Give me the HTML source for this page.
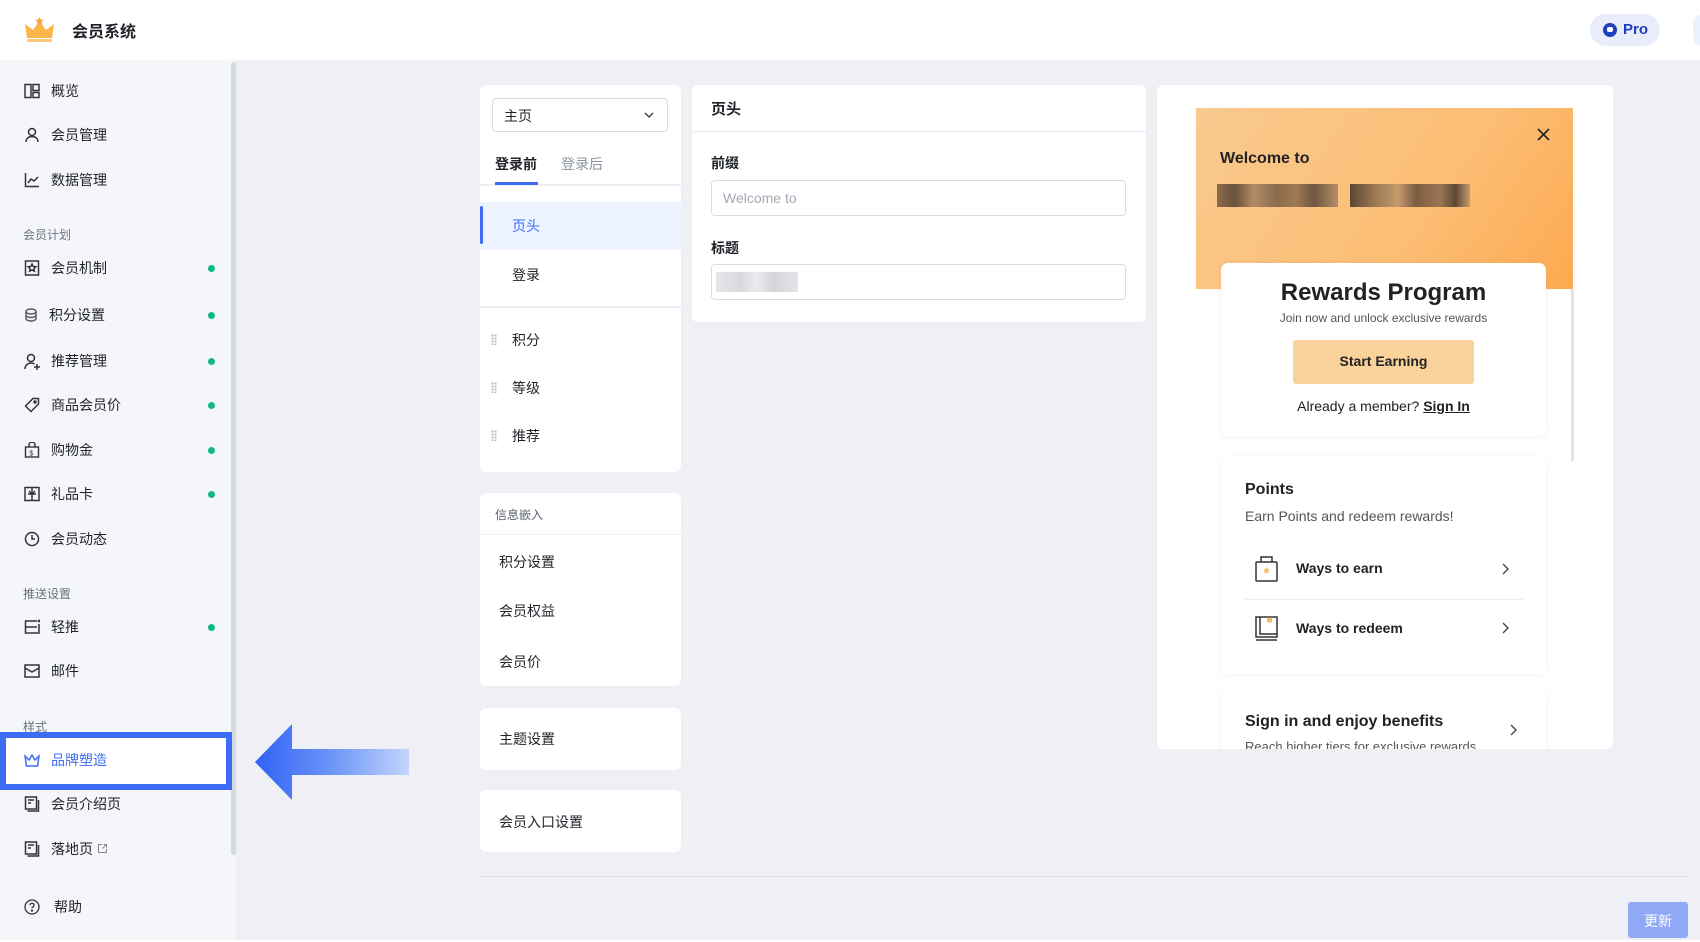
<!DOCTYPE html>
<html><head><meta charset="utf-8">
<style>
*{margin:0;padding:0;box-sizing:border-box}
body{width:1700px;height:942px;overflow:hidden;background:#eef0f5;font-family:"Liberation Sans","Noto Sans CJK SC",sans-serif;color:#1f2329;position:relative}
.a{position:absolute}
.hdr{left:0;top:0;width:1700px;height:60px;background:#fff}
.side{left:0;top:60px;width:236px;height:881px;background:#f5f6fa}
.mi{position:absolute;left:0;width:230px;height:40px;font-size:14px;color:#1f2329}
.mi svg{position:absolute;left:24px;top:12px}
.mi span{position:absolute;left:51px;top:10px}
.dot{position:absolute;left:208px;top:17px;width:7px;height:7px;border-radius:50%;background:#10b981}
.sec{position:absolute;left:23px;font-size:12px;color:#6b7280}
.panel{background:#fff;border-radius:6px}
.li{position:absolute;left:0;width:201px;font-size:14px;color:#1f2329}
.drag{position:absolute;left:11px;width:6px;height:11px;background-image:radial-gradient(circle,#b8bcc6 1px,transparent 1.2px);background-size:3px 3px}
.inp{border:1px solid #d9dce3;border-radius:4px;background:#fff}
</style></head><body>
<div class="a hdr">
 <svg class="a" style="left:24px;top:17px" width="31" height="26" viewBox="0 0 31 26"><path d="M1 7 L9 13 L15.5 4 L22 13 L30 7 L28 21 L3 21Z" fill="#fbb54a"/><path d="M15.5 0 l1.3 2.6 2.8.3-2 2 .5 2.8-2.6-1.4-2.6 1.4.5-2.8-2-2 2.8-.3z" fill="#f7a43c"/><rect x="3" y="22" width="25" height="3" rx="1" fill="#fcc877"/></svg>
 <div class="a" style="left:72px;top:18px;font-size:16px;font-weight:bold">会员系统</div>
 <div class="a" style="left:1590px;top:14px;width:70px;height:32px;border-radius:16px;background:#e9ecfb;color:#1e3fc0;font-size:15px;font-weight:bold;padding:7px 0 0 33px">Pro</div>
 <div class="a" style="left:1603px;top:23px;width:14px;height:14px;border-radius:50%;background:#1e3fc0"></div>
 <div class="a" style="left:1607px;top:27px;width:6px;height:5px;border-radius:2px;background:#fff"></div>
 <div class="a" style="left:1693px;top:14px;width:20px;height:32px;border-radius:16px;background:#eaf1fd"></div>
</div>
<div class="a side">
 <div class="a" style="left:231px;top:2px;width:5px;height:793px;background:#d5d9e2;border-radius:3px"></div>
</div>
<div class="mi" style="top:71px"><svg width="16" height="16" viewBox="0 0 16 16" fill="none" stroke="#333" stroke-width="1.5"><rect x="1" y="1.5" width="6" height="13"/><rect x="9" y="1.5" width="6" height="6"/><rect x="9" y="9.5" width="6" height="5"/></svg><span>概览</span></div>
<div class="mi" style="top:115px"><svg width="16" height="16" viewBox="0 0 16 16" fill="none" stroke="#333" stroke-width="1.5"><circle cx="8" cy="5" r="3.5"/><path d="M2 15c0-3.5 2.7-5.5 6-5.5s6 2 6 5.5"/></svg><span>会员管理</span></div>
<div class="mi" style="top:160px"><svg width="16" height="16" viewBox="0 0 16 16" fill="none" stroke="#333" stroke-width="1.5"><path d="M1.5 1v13.5H15M4 11l3-4 3 2 4-4"/></svg><span>数据管理</span></div>
<div class="sec" style="top:226px">会员计划</div>
<div class="mi" style="top:248px"><svg width="16" height="16" viewBox="0 0 16 16" fill="none" stroke="#333" stroke-width="1.5"><rect x="1.5" y="1" width="13" height="14"/><path d="M8 4l1.2 2.4 2.6.4-1.9 1.8.5 2.6L8 10l-2.4 1.2.5-2.6-1.9-1.8 2.6-.4z"/></svg><span>会员机制</span><i class="dot"></i></div>
<div class="mi" style="top:295px"><svg width="16" height="16" viewBox="0 0 16 16" fill="none" stroke="#555" stroke-width="1.4"><ellipse cx="7" cy="4.5" rx="5" ry="2.5"/><path d="M2 4.5v7c0 1.4 2.2 2.5 5 2.5s5-1.1 5-2.5v-7M2 8c0 1.4 2.2 2.5 5 2.5s5-1.1 5-2.5"/></svg><span style="left:49px">积分设置</span><i class="dot"></i></div>
<div class="mi" style="top:341px"><svg width="18" height="18" viewBox="0 0 18 18" fill="none" stroke="#333" stroke-width="1.5"><circle cx="7" cy="5" r="3.5"/><path d="M1 16c0-3.5 2.7-6 6-6 1.5 0 2.5.4 3.5 1M13 11v6M10 14h6"/></svg><span>推荐管理</span><i class="dot"></i></div>
<div class="mi" style="top:385px"><svg width="16" height="16" viewBox="0 0 16 16" fill="none" stroke="#333" stroke-width="1.5"><path d="M9 1.5h5.5V7L7 14.5 1.5 9z"/><circle cx="11" cy="5" r="1"/></svg><span>商品会员价</span><i class="dot"></i></div>
<div class="mi" style="top:430px"><svg width="16" height="16" viewBox="0 0 16 16" fill="none" stroke="#333" stroke-width="1.4"><rect x="1.5" y="5" width="13" height="10"/><path d="M5 5V3a3 3 0 0 1 6 0v2"/><text x="5.3" y="13.5" font-size="7" fill="#333" stroke="none">$</text></svg><span>购物金</span><i class="dot"></i></div>
<div class="mi" style="top:474px"><svg width="16" height="16" viewBox="0 0 16 16" fill="none" stroke="#333" stroke-width="1.5"><rect x="1" y="1.5" width="14" height="13"/><path d="M8 1.5v13M4 8h8M5 5l3 3 3-3"/></svg><span>礼品卡</span><i class="dot"></i></div>
<div class="mi" style="top:519px"><svg width="16" height="16" viewBox="0 0 16 16" fill="none" stroke="#333" stroke-width="1.5"><circle cx="8" cy="8" r="6.5"/><path d="M8 4v4h3"/></svg><span>会员动态</span></div>
<div class="sec" style="top:585px">推送设置</div>
<div class="mi" style="top:607px"><svg width="16" height="16" viewBox="0 0 16 16" fill="none" stroke="#333" stroke-width="1.5"><path d="M13 2H1.5v12H15V5M1.5 8H13"/><circle cx="15" cy="2" r=".6" fill="#333"/></svg><span>轻推</span><i class="dot"></i></div>
<div class="mi" style="top:651px"><svg width="16" height="16" viewBox="0 0 16 16" fill="none" stroke="#333" stroke-width="1.5"><rect x="1" y="2" width="14" height="12"/><path d="M1 5l7 4 7-4"/></svg><span>邮件</span></div>
<div class="sec" style="top:718px">样式</div>
<div class="a" style="left:0;top:732px;width:232px;height:58px;border:6px solid #3d6df5;background:#fff"></div>
<div class="mi" style="top:740px;color:#3d6df5"><svg width="16" height="16" viewBox="0 0 16 16" fill="none" stroke="#3d6df5" stroke-width="1.5"><path d="M1 4l4 4 3-5 3 5 4-4-1.5 10h-11z"/></svg><span>品牌塑造</span></div>
<div class="mi" style="top:784px"><svg width="16" height="16" viewBox="0 0 16 16" fill="none" stroke="#333" stroke-width="1.5"><rect x="1.5" y="1" width="11" height="12"/><path d="M4 4h6M4 7h3M3.5 15H14.5V4"/></svg><span>会员介绍页</span></div>
<div class="mi" style="top:829px"><svg width="16" height="16" viewBox="0 0 16 16" fill="none" stroke="#333" stroke-width="1.5"><rect x="1.5" y="1" width="11" height="12"/><path d="M4 4h6M4 7h3M3.5 15H14.5V4"/></svg><span>落地页 <svg width="11" height="11" viewBox="0 0 11 11" fill="none" stroke="#888" stroke-width="1" style="position:static;vertical-align:0"><path d="M5 1.5H1.5v8h8V6M6.5 1.5h3v3M9.5 1.5l-4 4"/></svg></span></div>
<div class="mi" style="top:887px"><svg width="16" height="16" viewBox="0 0 16 16" fill="none" stroke="#333" stroke-width="1.3"><circle cx="8" cy="8" r="7"/><path d="M6 6.3a2 2 0 1 1 2.5 1.9c-.4.2-.5.5-.5 1.2"/><circle cx="8" cy="11.6" r=".5" fill="#333"/></svg><span style="left:54px">帮助</span></div>
<div class="a" style="left:0;top:940px;width:1700px;height:2px;background:#fff"></div>

<svg class="a" style="left:254px;top:723px" width="156" height="78" viewBox="0 0 156 78"><defs><linearGradient id="g" x1="0" x2="1"><stop offset="0" stop-color="#2f63f6"/><stop offset=".5" stop-color="#6d95f8"/><stop offset="1" stop-color="#c3d5fd"/></linearGradient></defs><path d="M1 39 L38 1 V26 H155 V52 H38 V77Z" fill="url(#g)"/></svg>

<div class="a panel" style="left:480px;top:85px;width:201px;height:387px">
 <div class="a inp" style="left:12px;top:13px;width:176px;height:34px;font-size:14px;padding:7px 0 0 11px">主页
  <svg class="a" style="left:151px;top:13px" width="10" height="7" viewBox="0 0 10 7" fill="none" stroke="#333" stroke-width="1.3"><path d="M1 1l4 4 4-4"/></svg></div>
 <div class="a" style="left:15px;top:69px;font-size:14px;font-weight:bold">登录前</div>
 <div class="a" style="left:81px;top:69px;font-size:14px;color:#8b93a1">登录后</div>
 <div class="a" style="left:0;top:99px;width:201px;height:2px;background:#eef0f4"></div>
 <div class="a" style="left:15px;top:97px;width:43px;height:3px;background:#3d6df5"></div>
 <div class="a" style="left:0;top:117px;width:201px;height:48px;background:#edf4ff"></div>
 <div class="a" style="left:0;top:121px;width:3px;height:38px;background:#3d6df5;border-radius:2px"></div>
 <div class="li" style="left:32px;top:131px;color:#3d6df5">页头</div>
 <div class="li" style="left:32px;top:180px">登录</div>
 <div class="a" style="left:0;top:221px;width:201px;height:2px;background:#eef0f4"></div>
 <div class="drag" style="top:249px"></div><div class="li" style="left:32px;top:245px">积分</div>
 <div class="drag" style="top:297px"></div><div class="li" style="left:32px;top:293px">等级</div>
 <div class="drag" style="top:345px"></div><div class="li" style="left:32px;top:341px">推荐</div>
</div>
<div class="a panel" style="left:480px;top:493px;width:201px;height:193px">
 <div class="a" style="left:15px;top:13px;font-size:12px;color:#5c6370">信息嵌入</div>
 <div class="a" style="left:0;top:41px;width:201px;height:1px;background:#eef0f4"></div>
 <div class="li" style="left:19px;top:59px">积分设置</div>
 <div class="li" style="left:19px;top:108px">会员权益</div>
 <div class="li" style="left:19px;top:159px">会员价</div>
</div>
<div class="a panel" style="left:480px;top:708px;width:201px;height:62px"><div class="li" style="left:19px;top:21px">主题设置</div></div>
<div class="a panel" style="left:480px;top:790px;width:201px;height:62px"><div class="li" style="left:19px;top:22px">会员入口设置</div></div>

<div class="a panel" style="left:692px;top:85px;width:454px;height:237px">
 <div class="a" style="left:19px;top:13px;font-size:15px;font-weight:bold">页头</div>
 <div class="a" style="left:0;top:46px;width:454px;height:1px;background:#e8eaef"></div>
 <div class="a" style="left:19px;top:68px;font-size:14px;font-weight:bold">前缀</div>
 <div class="a inp" style="left:19px;top:95px;width:415px;height:36px;font-size:14px;color:#a3a9b4;padding:9px 0 0 11px">Welcome to</div>
 <div class="a" style="left:19px;top:153px;font-size:14px;font-weight:bold">标题</div>
 <div class="a inp" style="left:19px;top:179px;width:415px;height:36px"></div>
 <div class="a" style="left:24px;top:187px;width:82px;height:20px;background:linear-gradient(90deg,#e6e7ea,#d8d9dd 30%,#e9eaec 50%,#d4d5d9 70%,#e3e4e7)"></div>
</div>

<div class="a panel" style="left:1157px;top:85px;width:456px;height:664px;overflow:hidden">
 <div class="a" style="left:39px;top:23px;width:377px;height:181px;background:linear-gradient(125deg,#f8ca8e,#fcbd74 60%,#fdaa4f)"></div>
 <div class="a" style="left:414px;top:204px;width:3px;height:172px;background:#e3e4e7"></div>
 <svg class="a" style="left:380px;top:43px" width="13" height="13" viewBox="0 0 13 13" stroke="#222" stroke-width="1.6"><path d="M1 1l11 11M12 1L1 12"/></svg>
 <div class="a" style="left:63px;top:65px;font-size:16px;font-weight:bold;color:#222">Welcome to</div>
 <div class="a" style="left:60px;top:99px;width:121px;height:23px;background:linear-gradient(90deg,#8a6a4d,#6a523c 15%,#b18b64 30%,#8b6c4e 50%,#a07a55 65%,#6e5640 80%,#b58f68)"></div>
 <div class="a" style="left:193px;top:99px;width:120px;height:23px;background:linear-gradient(90deg,#5a4634,#9a7854 20%,#c49a6c 40%,#7a5e44 55%,#9c7652 75%,#5c4836 88%,#c69b6c)"></div>
 <div class="a" style="left:64px;top:178px;width:325px;height:173px;background:#fff;border-radius:7px;box-shadow:0 1px 6px rgba(0,0,0,.06)">
  <div class="a" style="left:0;width:325px;top:16px;text-align:center;font-size:24px;font-weight:bold;color:#222">Rewards Program</div>
  <div class="a" style="left:0;width:325px;top:48px;text-align:center;font-size:12px;color:#555">Join now and unlock exclusive rewards</div>
  <div class="a" style="left:72px;top:77px;width:181px;height:44px;background:#fad29c;border-radius:3px;text-align:center;font-size:14px;font-weight:bold;padding-top:13px;color:#222">Start Earning</div>
  <div class="a" style="left:0;width:325px;top:135px;text-align:center;font-size:14px;color:#222">Already a member? <b style="text-decoration:underline">Sign In</b></div>
 </div>
 <div class="a" style="left:64px;top:371px;width:325px;height:218px;background:#fff;border-radius:7px;box-shadow:0 1px 6px rgba(0,0,0,.06)">
  <div class="a" style="left:24px;top:25px;font-size:16px;font-weight:bold;color:#222">Points</div>
  <div class="a" style="left:24px;top:52px;font-size:14px;color:#555">Earn Points and redeem rewards!</div>
  <svg class="a" style="left:34px;top:99px" width="23" height="27" viewBox="0 0 23 27" fill="none" stroke="#333" stroke-width="1.5"><rect x="1" y="7" width="21" height="19" rx="1"/><path d="M6 7V2h11v5"/><path d="M11.5 12l1.2 2.3 2.4.3-1.8 1.6.5 2.4-2.3-1.2-2.3 1.2.5-2.4-1.8-1.6 2.4-.3z" fill="#f9b866" stroke="none"/></svg>
  <div class="a" style="left:75px;top:104px;font-size:14px;font-weight:bold;color:#222">Ways to earn</div>
  <svg class="a" style="left:280px;top:107px" width="8" height="12" viewBox="0 0 8 12" fill="none" stroke="#444" stroke-width="1.4"><path d="M2 1l5 5-5 5"/></svg>
  <div class="a" style="left:24px;top:143px;width:278px;height:1px;background:#ececec"></div>
  <svg class="a" style="left:34px;top:160px" width="23" height="25" viewBox="0 0 23 25" fill="none" stroke="#333" stroke-width="1.5"><rect x="1" y="1" width="21" height="20"/><path d="M5 1v17h17M1 24h21"/><rect x="12" y="1.5" width="5" height="5" fill="#f9b866" stroke="none"/></svg>
  <div class="a" style="left:75px;top:164px;font-size:14px;font-weight:bold;color:#222">Ways to redeem</div>
  <svg class="a" style="left:280px;top:166px" width="8" height="12" viewBox="0 0 8 12" fill="none" stroke="#444" stroke-width="1.4"><path d="M2 1l5 5-5 5"/></svg>
 </div>
 <div class="a" style="left:64px;top:604px;width:325px;height:100px;background:#fff;border-radius:7px;box-shadow:0 1px 6px rgba(0,0,0,.06)">
  <div class="a" style="left:24px;top:24px;font-size:16px;font-weight:bold;color:#222">Sign in and enjoy benefits</div>
  <div class="a" style="left:24px;top:50px;font-size:13px;color:#555">Reach higher tiers for exclusive rewards</div>
  <svg class="a" style="left:288px;top:35px" width="8" height="12" viewBox="0 0 8 12" fill="none" stroke="#444" stroke-width="1.4"><path d="M2 1l5 5-5 5"/></svg>
 </div>
</div>

<div class="a" style="left:480px;top:876px;width:1208px;height:1px;background:#d9dce3"></div>
<div class="a" style="left:1628px;top:902px;width:60px;height:36px;background:#8fa9f6;border-radius:3px;color:#fff;font-size:14px;text-align:center;padding-top:9px">更新</div>
</body></html>
